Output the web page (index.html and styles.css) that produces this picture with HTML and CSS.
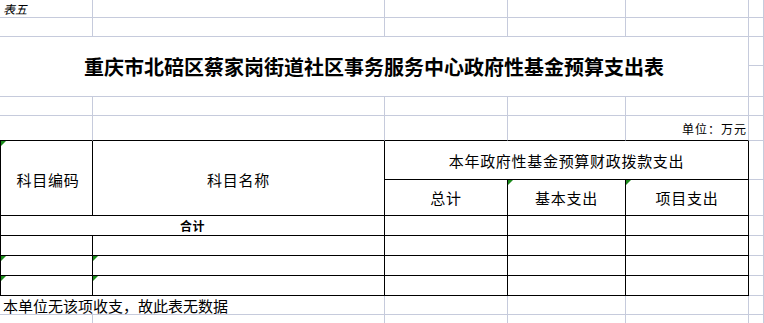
FILE: index.html
```html
<!DOCTYPE html>
<html lang="zh-CN">
<head>
<meta charset="utf-8">
<title>政府性基金预算支出表</title>
<link rel="stylesheet" href="styles.css">
</head>
<body>
<div class="sheet">
  <!-- row 1 -->
  <div class="c r1 label-small">表五</div>
  <div class="c r1"></div><div class="c r1"></div><div class="c r1"></div><div class="c r1"></div><div class="c r1"></div>
  <!-- row 2 -->
  <div class="c"></div><div class="c"></div><div class="c"></div><div class="c"></div><div class="c"></div><div class="c"></div>
  <!-- rows 3-4 title -->
  <div class="c title">重庆市北碚区蔡家岗街道社区事务服务中心政府性基金预算支出表</div>
  <div class="c"></div>
  <div class="c"></div>
  <!-- row 5 -->
  <div class="c"></div><div class="c"></div><div class="c"></div><div class="c"></div><div class="c"></div><div class="c"></div>
  <!-- row 6 -->
  <div class="c tb"></div><div class="c tb"></div><div class="c tb"></div><div class="c tb"></div>
  <div class="c tb unit">单位：万元</div>
  <div class="c"></div>
  <!-- rows 7-8 header -->
  <div class="c k kl head code mark">科目编码</div>
  <div class="c k head name">科目名称</div>
  <div class="c k head group">本年政府性基金预算财政拨款支出</div>
  <div class="c"></div>
  <div class="c k head">总计</div>
  <div class="c k head mark">基本支出</div>
  <div class="c k head mark">项目支出</div>
  <div class="c"></div>
  <!-- row 9 total -->
  <div class="c k kl total">合计</div>
  <div class="c k"></div><div class="c k"></div><div class="c k"></div>
  <div class="c"></div>
  <!-- row 10 -->
  <div class="c k kl"></div><div class="c k"></div><div class="c k"></div><div class="c k"></div><div class="c k"></div>
  <div class="c"></div>
  <!-- row 11 -->
  <div class="c k kl mark"></div><div class="c k mark"></div><div class="c k"></div><div class="c k"></div><div class="c k"></div>
  <div class="c"></div>
  <!-- row 12 -->
  <div class="c k kl mark"></div><div class="c k mark"></div><div class="c k"></div><div class="c k"></div><div class="c k"></div>
  <div class="c"></div>
  <!-- row 13 note -->
  <div class="c note">本单位无该项收支，故此表无数据</div>
  <div class="c"></div><div class="c"></div><div class="c"></div><div class="c"></div>
  <!-- row 14 -->
  <div class="c"></div><div class="c"></div><div class="c"></div><div class="c"></div><div class="c"></div><div class="c"></div>
</div>
</body>
</html>
```

FILE: styles.css
```css
html, body {
  margin: 0;
  padding: 0;
  background: #ffffff;
}

body {
  width: 764px;
  height: 323px;
  overflow: hidden;
  font-family: "Noto Sans CJK SC", "Noto Sans", sans-serif;
  color: #000;
}

.sheet {
  display: grid;
  grid-template-columns: 93px 292px 123px 118px 123px 15px;
  grid-template-rows: 18px 19px 29px 31px 19px 25px 39px 36px 20px 20px 20px 20px 19px 9px;
  width: 764px;
}

.c {
  box-sizing: border-box;
  border-right: 1px solid #c6cbdc;
  border-bottom: 1px solid #c6cbdc;
  position: relative;
  display: flex;
  align-items: center;
  justify-content: center;
  min-width: 0;
  overflow: visible;
  white-space: nowrap;
}

/* table borders */
.tb {
  border-bottom-color: #000;
}

.k {
  border-right-color: #000;
  border-bottom-color: #000;
}

.kl {
  border-left: 1px solid #000;
}

.label-small {
  justify-content: flex-start;
  padding-left: 3px;
  font-size: 12px;
  font-style: italic;
  line-height: 1;
}

.title {
  grid-column: 1 / 6;
  grid-row: 3 / 5;
  font-size: 20px;
  font-weight: 700;
  padding-bottom: 0;
}

.unit {
  justify-content: flex-end;
  padding-right: 1px;
  font-size: 12px;
  letter-spacing: 1px;
  padding-top: 1px;
}

.head {
  font-size: 15px;
  letter-spacing: 0.7px;
}

.code {
  grid-row: 7 / 9;
  padding-top: 2px;
  padding-left: 3px;
}

.name {
  grid-row: 7 / 9;
  padding-top: 2px;
}

.group {
  grid-column: 3 / 6;
}

.total {
  grid-column: 1 / 3;
  font-size: 12px;
  font-weight: 700;
  letter-spacing: 0.5px;
}

.note {
  grid-column: 1 / 3;
  justify-content: flex-start;
  padding-left: 3px;
  font-size: 15px;
  padding-top: 1px;
}

.mark::before {
  content: "";
  position: absolute;
  top: 0;
  left: 0;
  width: 0;
  height: 0;
  border-top: 5px solid #1b8a1b;
  border-right: 5px solid transparent;
}
```
